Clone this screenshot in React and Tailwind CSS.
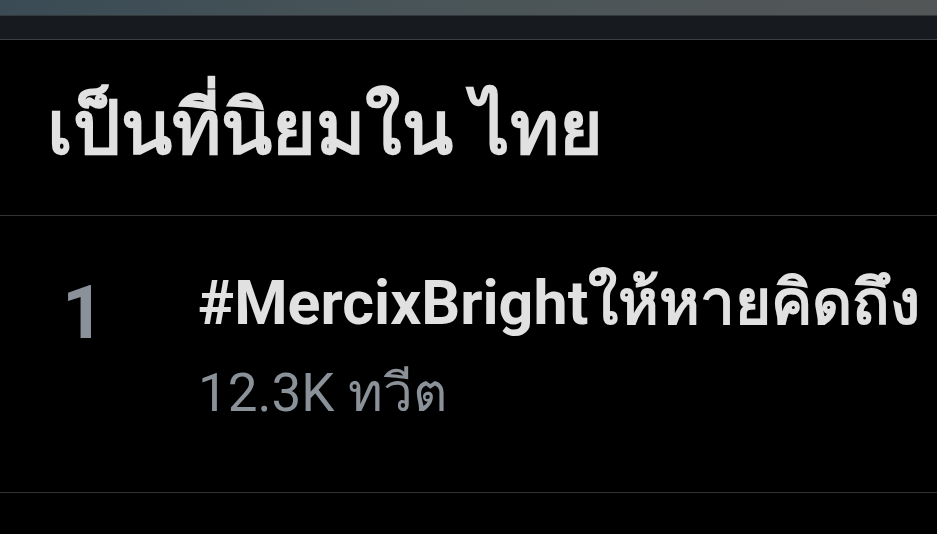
import React from 'react';

const trend = {
  rank: 1,
  tag: '#MercixBright',
  tagThai: 'ให้หายคิดถึง',
  count: '12.3K',
  unit: 'ทวีต',
};

export default function App() {
  return (
    <div className="w-[937px] h-[534px] overflow-hidden bg-black font-['Roboto','Noto_Sans',sans-serif]">
      <div className="h-[15px] bg-gradient-to-r from-[#3a4b55] via-[#4a5558] to-[#535657]" />
      <div className="h-px bg-[#33383c]" />
      <div className="h-[23px] bg-[#171a1e]" />
      <div className="h-px bg-[#3b3e42]" />

      <div className="h-[175px] pl-[47px] pt-[51px]">
        <h1 className="text-[75px] leading-none font-bold text-[#e1e1e1] whitespace-nowrap">เป็นที่นิยมใน ไทย</h1>
      </div>
      <div className="h-px bg-[#2f3336]" />

      <div className="h-[276px] flex pt-[56px]">
        <div className="w-[198px] shrink-0 pl-[62px] pt-[4px] text-[74px] leading-none font-bold text-[#8a9199]">{trend.rank}</div>
        <div className="flex flex-col whitespace-nowrap">
          <div className="text-[61px] leading-none font-bold text-[#e1e1e1]">
            {trend.tag}
            <span className="text-[62px]">{trend.tagThai}</span>
          </div>
          <div className="mt-[33px] text-[53px] leading-none text-[#8a9199]">
            {trend.count} {trend.unit}
          </div>
        </div>
      </div>
      <div className="h-px bg-[#2f3336]" />
    </div>
  );
}
